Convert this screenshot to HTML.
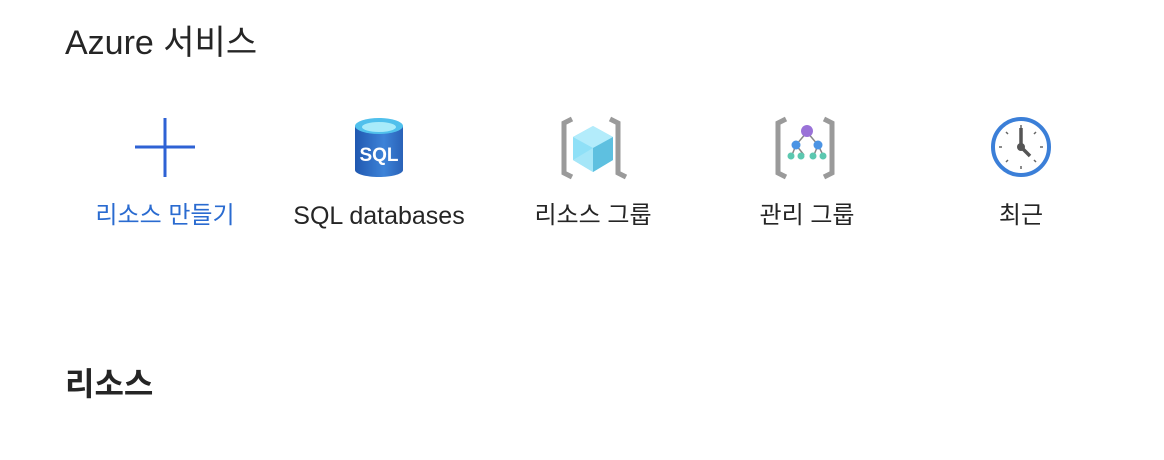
<!DOCTYPE html>
<html><head><meta charset="utf-8"><style>
body{margin:0;width:1164px;height:460px;background:#fff;font-family:"Liberation Sans","Noto Sans CJK KR",sans-serif;color:#252525;position:relative;overflow:hidden}
.h{position:absolute;left:65px;font-size:34px;line-height:1}
.it{position:absolute;top:110px;width:214px;text-align:center}
.it svg{display:block;margin:0 auto;height:74px}
.lb{position:absolute;top:92px;width:100%;font-size:24px;line-height:28px;text-align:center;white-space:nowrap}
</style></head><body>
<div class="h" style="top:26px">Azure 서비스</div>
<div class="h" style="top:368px;font-weight:bold;font-size:32px">리소스</div>

<div class="it" style="left:58px">
<svg width="74" height="74" viewBox="0 0 74 74"><path d="M37 8V67M7 37H67" stroke="#2e62d4" stroke-width="3"/></svg>
<div class="lb" style="color:#2a6bd0">리소스 만들기</div></div>

<div class="it" style="left:272px">
<svg width="74" height="74" viewBox="0 0 74 74">
<defs><linearGradient id="g" x1="0" x2="1"><stop offset="0" stop-color="#2058b0"/><stop offset=".6" stop-color="#3d83d8"/><stop offset="1" stop-color="#2a62b8"/></linearGradient></defs>
<path d="M13 16V60c0 4 11 7 24 7s24-3 24-7V16z" fill="url(#g)"/>
<ellipse cx="37" cy="16" rx="24" ry="8" fill="#50c0ec"/>
<ellipse cx="37" cy="17" rx="17" ry="5" fill="#a8ebfa"/>
<text x="37" y="51" font-family="Liberation Sans" font-weight="bold" font-size="19" fill="#fff" text-anchor="middle">SQL</text></svg>
<div class="lb" style="font-size:25px">SQL databases</div></div>

<div class="it" style="left:486px">
<svg width="74" height="74" viewBox="0 0 74 74">
<path d="M16 9l-8 4v50l8 4" stroke="#9a9a9a" stroke-width="5" fill="none"/>
<path d="M58 9l8 4v50l8 4" stroke="#9a9a9a" stroke-width="5" fill="none" transform="translate(-4 0)"/>
<path d="M37 16l20 11v23L37 62 17 50V27z" fill="#8fe0f7"/>
<path d="M37 16l20 11-20 11-20-11z" fill="#b3ecfb"/>
<path d="M57 27v23L37 62V38z" fill="#5ec0e0"/>
<path d="M17 50l20-12v24z" fill="#a5e6f8"/></svg>
<div class="lb">리소스 그룹</div></div>

<div class="it" style="left:700px">
<svg width="74" height="74" viewBox="0 0 74 74">
<path d="M16 9l-8 4v50l8 4" stroke="#9a9a9a" stroke-width="5" fill="none"/>
<path d="M54 9l8 4v50l-8 4" stroke="#9a9a9a" stroke-width="5" fill="none"/>
<path d="M37 22L26 35 22 45M26 35l8 10M37 22l11 13-4 10M48 35l5 10" stroke="#888" stroke-width="1.5" fill="none"/>
<circle cx="37" cy="21" r="6" fill="#9a72d8"/>
<circle cx="26" cy="35" r="4.5" fill="#4b94e4"/><circle cx="48" cy="35" r="4.5" fill="#4b94e4"/>
<circle cx="21" cy="46" r="3.5" fill="#5cc8b0"/><circle cx="31" cy="46" r="3.5" fill="#5cc8b0"/>
<circle cx="43" cy="46" r="3.5" fill="#5cc8b0"/><circle cx="53" cy="46" r="3.5" fill="#5cc8b0"/></svg>
<div class="lb">관리 그룹</div></div>

<div class="it" style="left:914px">
<svg width="74" height="74" viewBox="0 0 74 74">
<circle cx="37" cy="37" r="28" fill="#fff" stroke="#3b7fd8" stroke-width="4"/>
<g stroke="#666" stroke-width="1.5"><path d="M37 15v3M37 56v3M15 37h3M56 37h3M22 22l2 2M52 22l-2 2M22 52l2-2M52 52l-2-2"/></g>
<path d="M37 18v19l9 9" stroke="#555" stroke-width="3.5" fill="none"/>
<circle cx="37" cy="37" r="4" fill="#555"/></svg>
<div class="lb">최근</div></div>
</body></html>
